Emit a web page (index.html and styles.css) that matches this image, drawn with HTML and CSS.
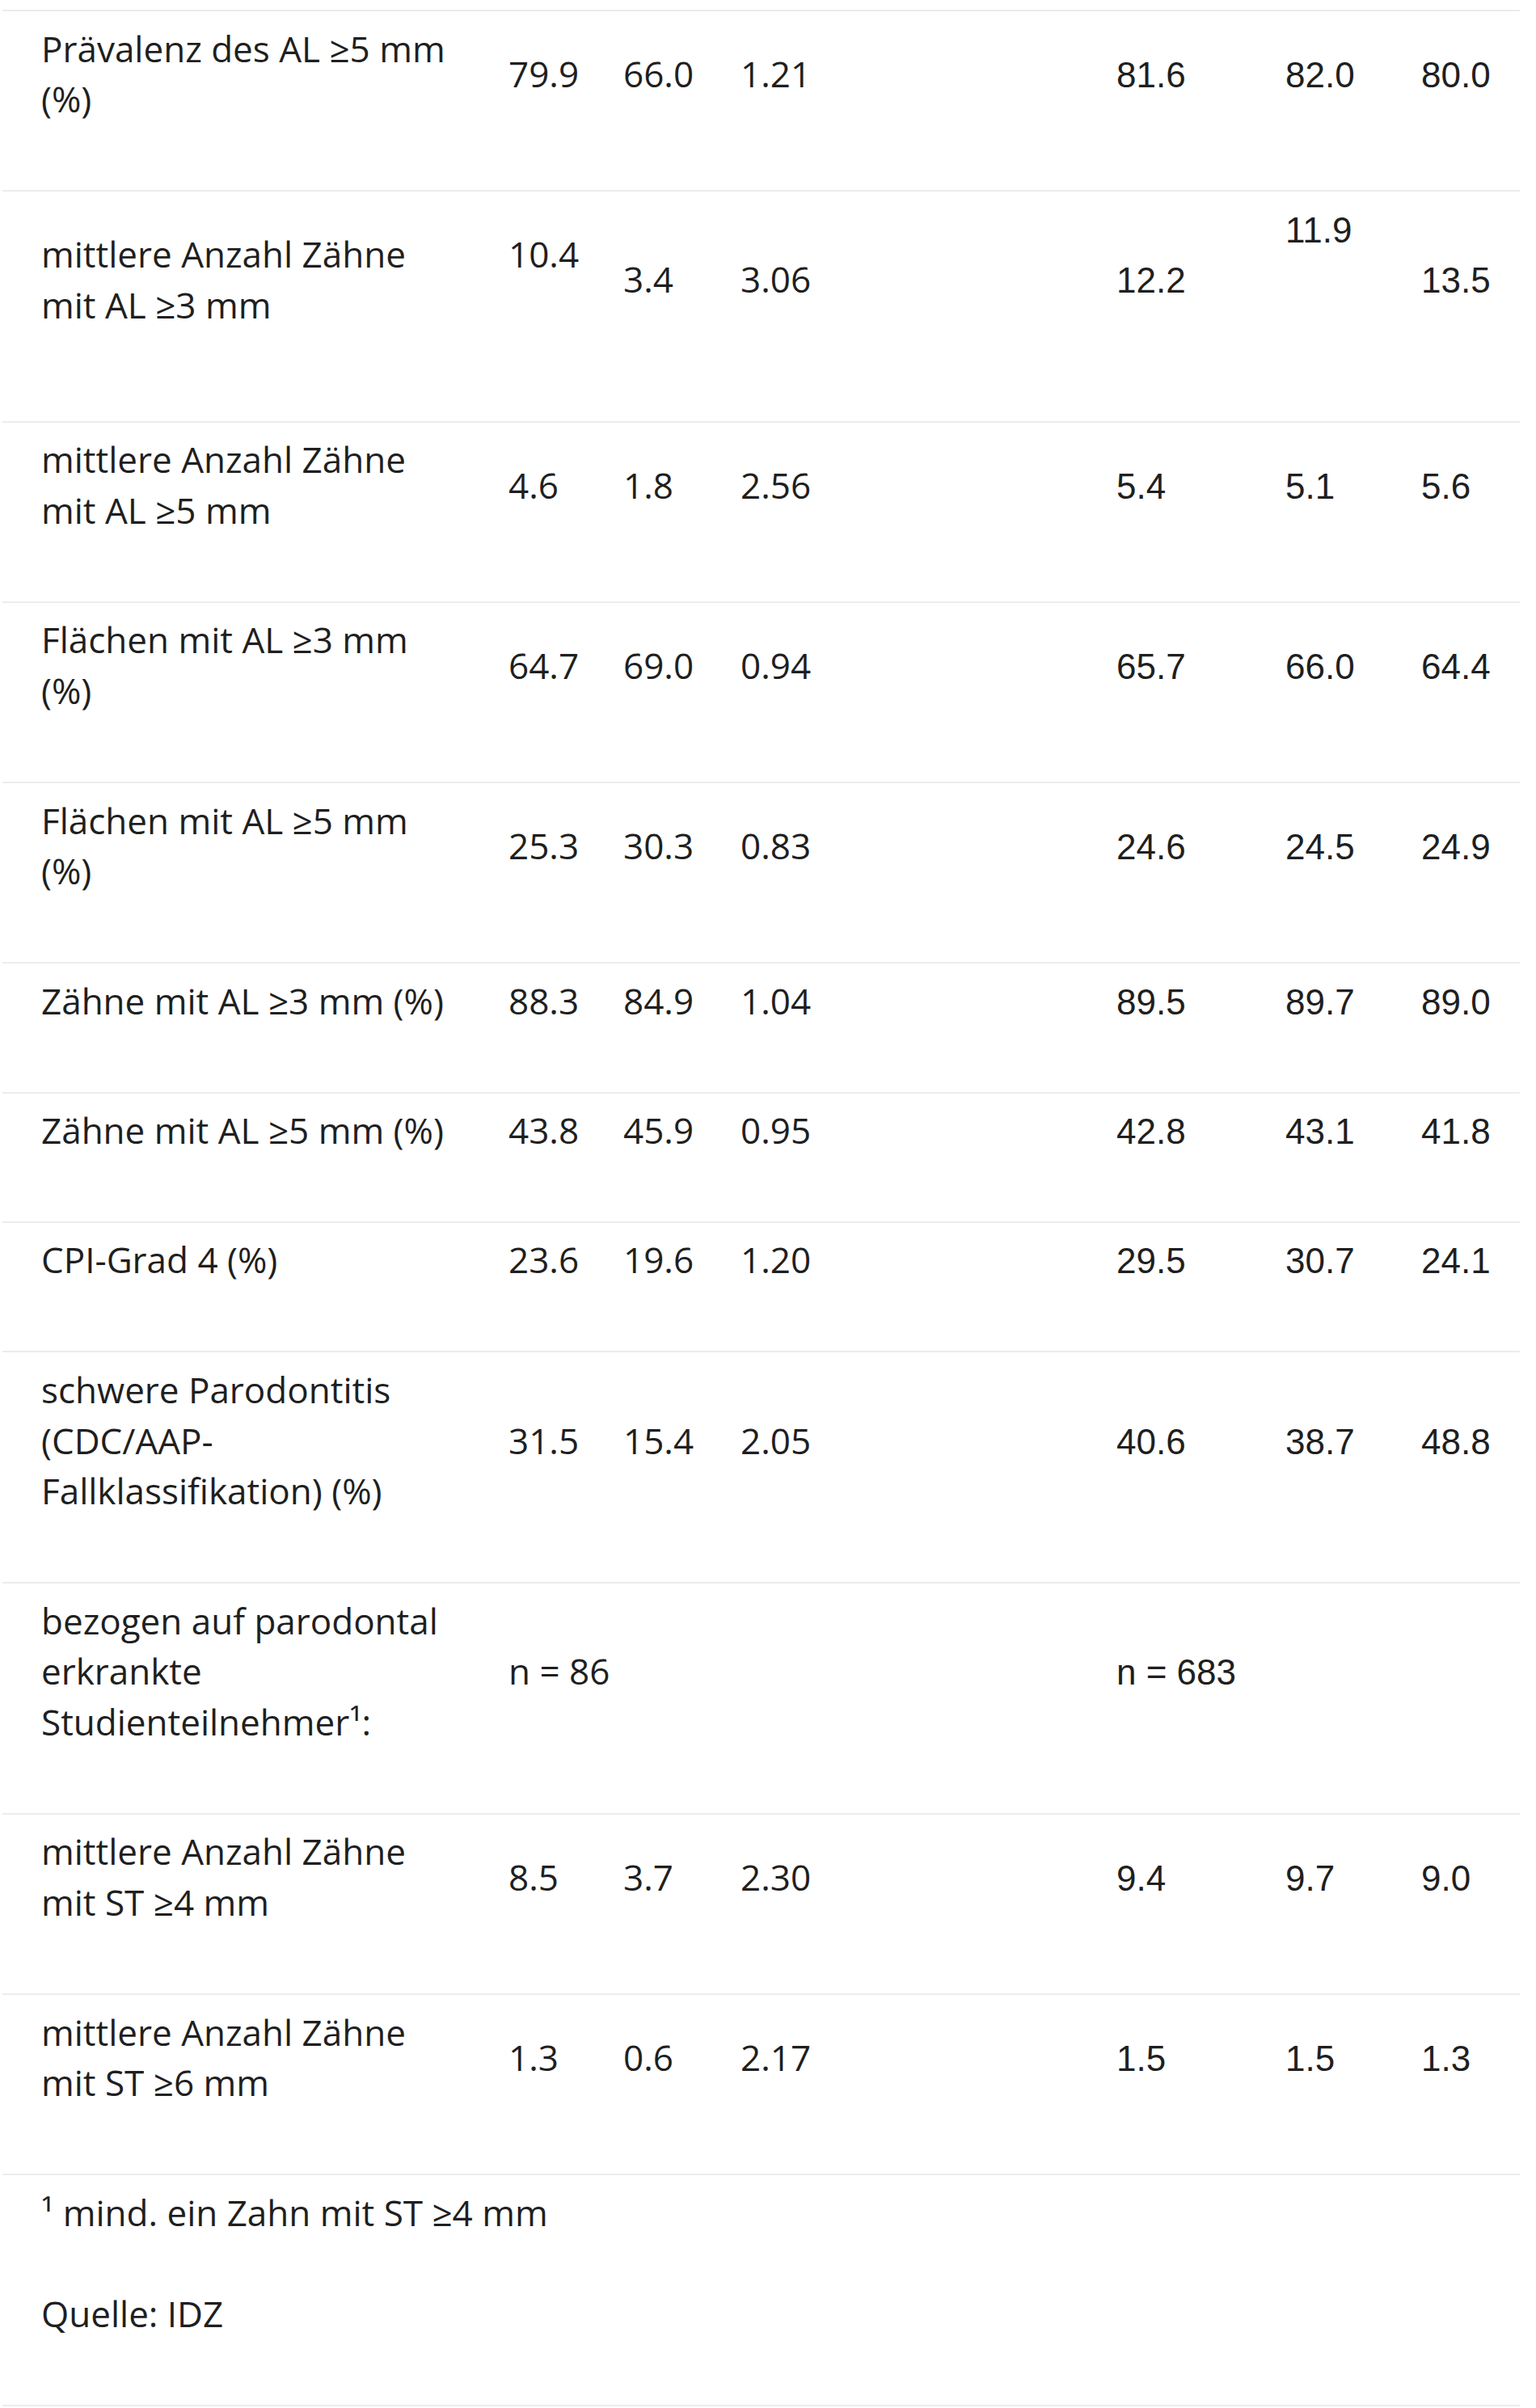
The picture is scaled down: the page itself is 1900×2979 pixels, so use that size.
FILE: index.html
```html
<!DOCTYPE html>
<html lang="de">
<head>
<meta charset="utf-8">
<title>Parodontitis – Tabelle</title>
<link rel="stylesheet" href="styles.css">
</head>
<body>
<div class="wrap">
<table class="data">
  <colgroup>
    <col class="c0"><col class="c1"><col class="c2"><col class="c3"><col class="c4"><col class="c5"><col class="c6">
  </colgroup>
  <tbody>
    <tr>
      <td class="label"><p>Prävalenz des AL ≥5 mm (%)</p></td>
      <td><p>79.9</p></td><td><p>66.0</p></td><td><p>1.21</p></td>
      <td class="alt"><p>81.6</p></td><td class="alt"><p>82.0</p></td><td class="alt"><p>80.0</p></td>
    </tr>
    <tr>
      <td class="label"><p>mittlere Anzahl Zähne mit AL ≥3 mm</p></td>
      <td><p>10.4<br>&nbsp;</p></td><td><p>3.4</p></td><td><p>3.06</p></td>
      <td class="alt"><p>12.2</p></td><td class="alt"><p>11.9</p><p>&nbsp;</p></td><td class="alt"><p>13.5</p></td>
    </tr>
    <tr>
      <td class="label"><p>mittlere Anzahl Zähne mit AL ≥5 mm</p></td>
      <td><p>4.6</p></td><td><p>1.8</p></td><td><p>2.56</p></td>
      <td class="alt"><p>5.4</p></td><td class="alt"><p>5.1</p></td><td class="alt"><p>5.6</p></td>
    </tr>
    <tr>
      <td class="label"><p>Flächen mit AL ≥3 mm (%)</p></td>
      <td><p>64.7</p></td><td><p>69.0</p></td><td><p>0.94</p></td>
      <td class="alt"><p>65.7</p></td><td class="alt"><p>66.0</p></td><td class="alt"><p>64.4</p></td>
    </tr>
    <tr>
      <td class="label"><p>Flächen mit AL ≥5 mm (%)</p></td>
      <td><p>25.3</p></td><td><p>30.3</p></td><td><p>0.83</p></td>
      <td class="alt"><p>24.6</p></td><td class="alt"><p>24.5</p></td><td class="alt"><p>24.9</p></td>
    </tr>
    <tr>
      <td class="label"><p>Zähne mit AL ≥3 mm (%)</p></td>
      <td><p>88.3</p></td><td><p>84.9</p></td><td><p>1.04</p></td>
      <td class="alt"><p>89.5</p></td><td class="alt"><p>89.7</p></td><td class="alt"><p>89.0</p></td>
    </tr>
    <tr>
      <td class="label"><p>Zähne mit AL ≥5 mm (%)</p></td>
      <td><p>43.8</p></td><td><p>45.9</p></td><td><p>0.95</p></td>
      <td class="alt"><p>42.8</p></td><td class="alt"><p>43.1</p></td><td class="alt"><p>41.8</p></td>
    </tr>
    <tr>
      <td class="label"><p>CPI-Grad 4 (%)</p></td>
      <td><p>23.6</p></td><td><p>19.6</p></td><td><p>1.20</p></td>
      <td class="alt"><p>29.5</p></td><td class="alt"><p>30.7</p></td><td class="alt"><p>24.1</p></td>
    </tr>
    <tr>
      <td class="label"><p>schwere Parodontitis (CDC/AAP-Fallklassifikation) (%)</p></td>
      <td><p>31.5</p></td><td><p>15.4</p></td><td><p>2.05</p></td>
      <td class="alt"><p>40.6</p></td><td class="alt"><p>38.7</p></td><td class="alt"><p>48.8</p></td>
    </tr>
    <tr>
      <td class="label"><p>bezogen auf parodontal erkrankte Studienteilnehmer¹:</p></td>
      <td colspan="3"><p>n = 86</p></td>
      <td colspan="3" class="alt"><p>n = 683</p></td>
    </tr>
    <tr>
      <td class="label"><p>mittlere Anzahl Zähne mit ST ≥4 mm</p></td>
      <td><p>8.5</p></td><td><p>3.7</p></td><td><p>2.30</p></td>
      <td class="alt"><p>9.4</p></td><td class="alt"><p>9.7</p></td><td class="alt"><p>9.0</p></td>
    </tr>
    <tr>
      <td class="label"><p>mittlere Anzahl Zähne mit ST ≥6 mm</p></td>
      <td><p>1.3</p></td><td><p>0.6</p></td><td><p>2.17</p></td>
      <td class="alt"><p>1.5</p></td><td class="alt"><p>1.5</p></td><td class="alt"><p>1.3</p></td>
    </tr>
    <tr class="foot">
      <td colspan="7"><p>¹ mind. ein Zahn mit ST ≥4 mm</p><p>Quelle: IDZ</p></td>
    </tr>
  </tbody>
</table>
</div>
</body>
</html>
```
FILE: styles.css
```css
html, body {
  margin: 0;
  padding: 0;
  background: #ffffff;
}

body {
  font-family: "Open Sans", "Liberation Sans", Arial, sans-serif;
  font-size: 44px;
  line-height: 62.7px;
  color: #1f1f1f;
}

.wrap {
  padding: 12px 0 0 3px;
  width: 1877px;
}

.data {
  width: 1877px;
  table-layout: fixed;
  border-collapse: collapse;
  border-spacing: 0;
}

.c0 { width: 578px; }
.c1 { width: 142px; }
.c2 { width: 145px; }
.c3 { width: 465px; }
.c4 { width: 209px; }
.c5 { width: 168px; }
.c6 { width: 170px; }

.data td {
  vertical-align: middle;
  text-align: left;
  padding: 14.5px 0 18.5px 48px;
  border-top: 2px solid #ececec;
  white-space: normal;
}

.data td.label {
  padding-right: 14px;
}

.data td.alt {
  font-family: "Liberation Sans", Arial, sans-serif;
  padding-top: 16.5px;
  padding-bottom: 16.5px;
}

.data tr:last-child td {
  border-bottom: 2px solid #ececec;
}

.data p {
  margin: 0 0 62.7px 0;
}
```
